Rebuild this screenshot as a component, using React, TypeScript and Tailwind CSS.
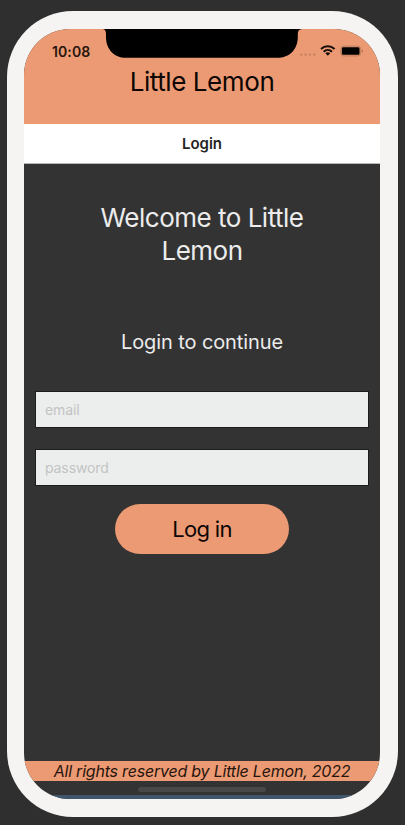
import React from 'react';

function Notch() {
  return (
    <svg className="absolute left-[79px] top-0" width="200" height="29" viewBox="0 0 200 29" aria-hidden="true">
      <path d="M0 0H199C196 .6 194.800 2 194.800 5V8C194.800 20 187 28.800 174 28.800H23C11 28.800 3 20 3 8V5C3 2 2 .6 0 0Z" fill="#000" />
    </svg>
  );
}

function StatusIcons() {
  return (
    <svg width="64" height="14" viewBox="0 0 64 14" aria-hidden="true">
      <g fill="#c07f60">
        <circle cx="2.300" cy="11.700" r="1.100" />
        <circle cx="6.600" cy="11.700" r="1.100" />
        <circle cx="10.900" cy="11.700" r="1.100" />
        <circle cx="15.200" cy="11.700" r="1.100" />
      </g>
      <g fill="none" stroke="#160c08" strokeWidth="2">
        <path d="M22 5.900A10.200 10.200 0 0 1 35.600 5.900" />
        <path d="M24.600 8.700A6.200 6.200 0 0 1 33 8.700" />
      </g>
      <path d="M26.400 10.300A3.600 3.600 0 0 1 31.200 10.300L28.800 12.800Z" fill="#160c08" />
      <rect x="41.700" y="3" width="20" height="10" rx="2.800" fill="#e0906a" stroke="#c07f60" strokeWidth=".9" />
      <rect x="42.900" y="4.300" width="17.600" height="7.500" rx="1.300" fill="#000" />
      <path d="M62.800 6.300C64.200 7 64.200 9 62.800 9.700Z" fill="#a0674b" />
    </svg>
  );
}

function Field({ label, type }: { label: string; type: string }) {
  return (
    <input
      type={type}
      placeholder={label}
      aria-label={label}
      className="block h-[37px] w-full rounded-none border border-[#1c1c1c] bg-[#eceeed] px-[9px] text-[14px] tracking-[-0.1px] text-[#333333] outline-none placeholder:text-[#c2c4c4]"
    />
  );
}

export default function App() {
  return (
    <div className="flex h-[825px] w-[405px] justify-center overflow-hidden bg-[#2f2f2f] pt-[11px] font-['Inter','Liberation_Sans',sans-serif]">
      <div className="h-[806px] w-[391px] rounded-[66px] bg-[#f5f4f2] px-[17px] pt-[18px] pb-[18px]">
        <div className="relative flex h-[770px] w-[356px] flex-col overflow-hidden rounded-[46px] bg-[#333333]">
          <header className="h-[95px] shrink-0 bg-[#ec9a73]">
            <Notch />
            <div className="flex h-[37px] items-start justify-between pt-[14px] pr-[17px] pl-[28px]">
              <span className="text-[14px] leading-[17px] font-semibold tracking-[0.1px] text-[#26150d]">10:08</span>
              <StatusIcons />
            </div>
            <h1 className="text-center text-[26px] leading-[32px] tracking-[-0.42px] text-[#0d0604]">Little Lemon</h1>
          </header>
          <nav className="flex h-[40px] shrink-0 items-center justify-center border-b border-[#b8b8b8] bg-white pt-[2px] text-[15px] font-semibold text-[#242424]">
            Login
          </nav>
          <main className="flex flex-1 flex-col items-center px-[11px]">
            <h2 className="mt-[37px] w-[240px] text-center text-[26px] leading-[33px] tracking-[-0.5px] text-[#ececec]">Welcome to Little Lemon</h2>
            <p className="mt-[59px] text-[20px] leading-[32px] tracking-[-0.1px] text-[#ececec]">Login to continue</p>
            <form className="mt-[33px] flex w-full flex-col items-center" onSubmit={(e) => e.preventDefault()}>
              <Field label="email" type="email" />
              <div className="mt-[21px] w-full">
                <Field label="password" type="password" />
              </div>
              <button type="submit" className="mt-[18px] h-[50px] w-[174px] rounded-full bg-[#ec9a73] text-[22px] tracking-[-0.7px] text-[#0d0604]">
                Log in
              </button>
            </form>
          </main>
          <footer className="shrink-0">
            <p className="h-[20px] bg-[#ec9a73] text-center text-[16px] leading-[20px] tracking-[-0.21px] text-[#26150d] italic">All rights reserved by Little Lemon, 2022</p>
            <div className="flex h-[14px] items-center justify-center pt-[2px]">
              <span className="h-[5px] w-[128px] rounded-full bg-[#484848]" />
            </div>
            <div className="h-[4px] bg-[#3f566d]" />
          </footer>
        </div>
      </div>
    </div>
  );
}
